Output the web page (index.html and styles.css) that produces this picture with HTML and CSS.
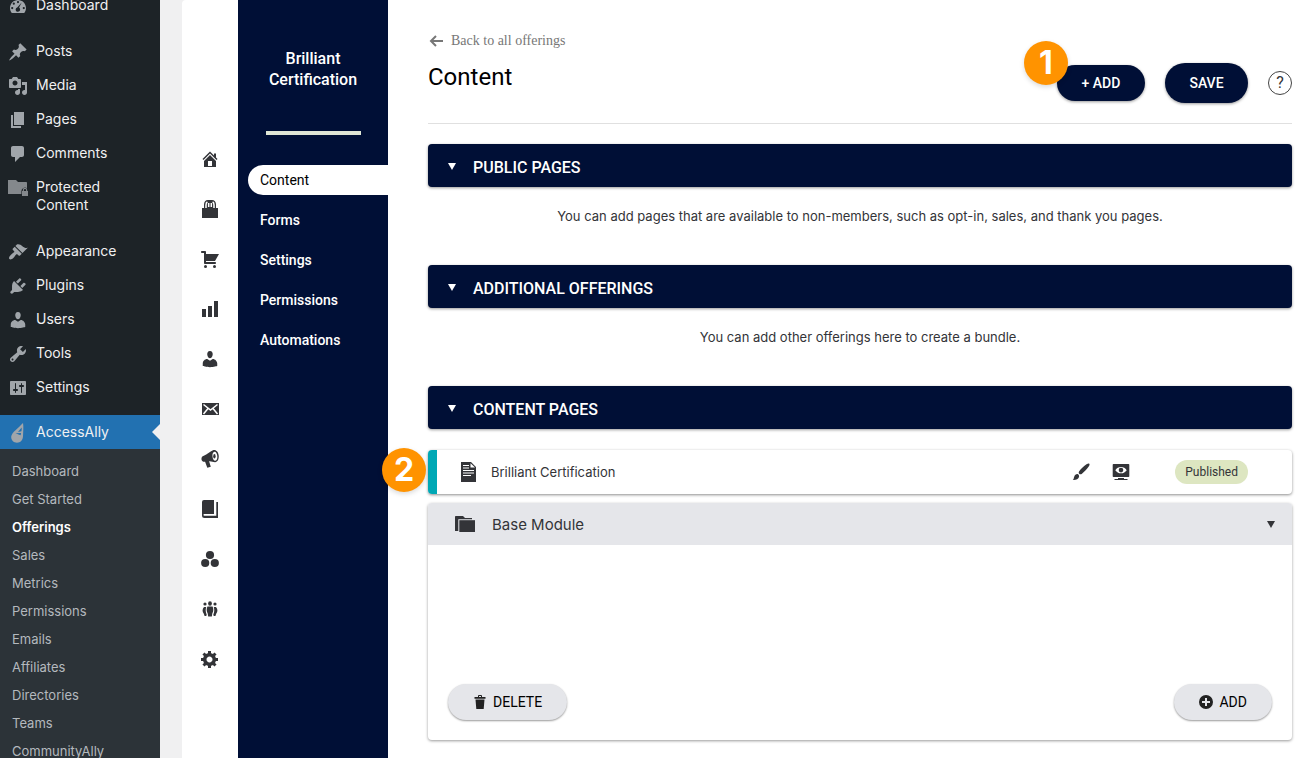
FILE: index.html
```
<!DOCTYPE html>
<html lang="en">
<head>
<meta charset="UTF-8" />
<meta name="viewport" content="width=device-width, initial-scale=1" />
<title>Content - Brilliant Certification</title>
<link rel="stylesheet" href="styles.css">
</head>
<body>
<div class="layout">

  <!-- WordPress admin menu -->
  <nav class="wp-menu" aria-label="Main menu">
    <ul class="wp-list">
      <li><a href="#"><svg viewBox="0 0 20 20"><path fill-rule="evenodd" d="M3.8 17h12.4c1.100-1.400 1.800-3.100 1.800-5 0-4.400-3.600-8-8-8s-8 3.600-8 8c0 1.900.7 3.600 1.800 5zM10 5a1.100 1.100 0 1 0 0 2.200A1.100 1.100 0 0 0 10 5zM5.800 6.600a1.100 1.100 0 1 0 0 2.200 1.100 1.100 0 0 0 0-2.200zM4.200 11a1.100 1.100 0 1 0 0 2.200 1.100 1.100 0 0 0 0-2.200zM15.800 11a1.100 1.100 0 1 0 0 2.200 1.100 1.100 0 0 0 0-2.200zM13.700 6.500l-2.600 5.100c1.200.8 1.400 2.500.5 3.500-1 1-2.700.9-3.500-.2-.9-1.200-.4-3 1.100-3.500z"/></svg>Dashboard</a></li>
      <li class="spaced"><a href="#"><svg viewBox="0 0 20 20"><path d="M10.440 3.020l1.820-1.820 6.360 6.350-1.830 1.820c-1.050-.68-2.480-.57-3.410.36l-.75.75c-.92.93-1.040 2.350-.35 3.410l-1.830 1.820-2.410-2.410-2.800 2.790c-.42.42-3.380 2.710-3.800 2.290s1.860-3.390 2.280-3.810l2.790-2.790L4.100 9.360l1.830-1.820c1.050.69 2.480.57 3.400-.36l.75-.75c.93-.92 1.050-2.350.36-3.410z"/></svg>Posts</a></li>
      <li><a href="#"><svg viewBox="0 0 20 20"><path fill-rule="evenodd" d="M13 11V4c0-.55-.45-1-1-1h-1.670L9 1H5L3.670 3H2c-.55 0-1 .45-1 1v7c0 .55.45 1 1 1h10c.55 0 1-.45 1-1zM7 4.500c1.380 0 2.500 1.120 2.500 2.500S8.380 9.500 7 9.500 4.500 8.380 4.500 7 5.620 4.500 7 4.500zM14 6h5v10.500c0 1.380-1.120 2.500-2.500 2.500S14 17.880 14 16.500s1.120-2.500 2.500-2.500c.17 0 .34.02.5.05V9h-3V6zm-4 8.050V13h2v3.500c0 1.380-1.120 2.500-2.500 2.500S7 17.880 7 16.500 8.120 14 9.500 14c.17 0 .34.02.5.05z"/></svg>Media</a></li>
      <li><a href="#"><svg viewBox="0 0 20 20"><path d="M6 15V2h10v13H6zm-1 1h8v2H3V5h2v11z"/></svg>Pages</a></li>
      <li><a href="#"><svg viewBox="0 0 20 20"><path d="M5 2h9c1.100 0 2 .9 2 2v7c0 1.100-.9 2-2 2h-2l-5 5v-5H5c-1.100 0-2-.9-2-2V4c0-1.100.9-2 2-2z"/></svg>Comments</a></li>
      <li><a href="#"><svg viewBox="0 0 20 20" class="dim"><path d="M0 2h8l2 2h8c.6 0 1 .4 1 1v5.200a3.600 3.600 0 0 0-5.600 2.800v3H0z"/><path fill-rule="evenodd" d="M14 13h.8v-1a2.200 2.200 0 0 1 4.400 0v1h.8v5h-6zM15.900 13h2.200v-1a1.100 1.100 0 0 0-2.200 0z"/></svg>Protected Content</a></li>
      <li class="spaced"><a href="#"><svg viewBox="0 0 20 20"><path d="M14.480 11.060L7.410 3.990l1.500-1.500c.5-.56 2.300-.47 3.510.32 1.210.8 1.430 1.280 2.910 2.100 1.180.64 2.450 1.260 4.450.85zm-.71.71L6.700 4.700 4.930 6.470c-.39.39-.39 1.020 0 1.410l1.060 1.060c.39.39.39 1.030 0 1.420-.6.6-1.430 1.110-2.210 1.690-.35.26-.7.53-1.010.84C1.430 14.230.4 16.080 1.400 17.070c.99 1 2.840-.03 4.180-1.360.31-.31.58-.66.85-1.020.57-.78 1.080-1.610 1.690-2.210.39-.39 1.020-.39 1.410 0l1.060 1.060c.39.39 1.020.39 1.410 0z"/></svg>Appearance</a></li>
      <li><a href="#"><svg viewBox="0 0 20 20"><path d="M13.110 4.360L9.870 7.600 8 5.730l3.240-3.240c.35-.34 1.050-.2 1.560.32.52.51.66 1.210.31 1.550zm-8 1.770l.91-1.120 9.010 9.010-1.190.84c-.71.71-2.630 1.160-3.820 1.160H6.140L4.900 17.260c-.59.59-1.540.59-2.120 0-.59-.58-.59-1.530 0-2.120l1.240-1.240v-3.880c0-1.130.4-3.190 1.090-3.890zm7.260 3.970l3.240-3.240c.34-.35 1.040-.21 1.550.31.52.51.66 1.210.31 1.550l-3.240 3.250z"/></svg>Plugins</a></li>
      <li><a href="#"><svg viewBox="0 0 20 20"><path d="M10 9.250c-2.270 0-2.730-3.440-2.730-3.440C7 4.020 7.820 2 9.970 2c2.160 0 2.980 2.020 2.710 3.810 0 0-.41 3.440-2.680 3.440zm0 2.570L12.720 10c2.390 0 4.520 2.330 4.520 4.530v2.490s-3.650 1.130-7.240 1.130c-3.650 0-7.240-1.130-7.240-1.130v-2.490c0-2.250 1.940-4.480 4.470-4.480z"/></svg>Users</a></li>
      <li><a href="#"><svg viewBox="0 0 20 20"><path fill-rule="evenodd" d="M16.680 9.770c-1.340 1.340-3.300 1.670-4.950.99l-5.410 6.520c-.99.99-2.590.99-3.580 0s-.99-2.590 0-3.570l6.520-5.420c-.68-1.650-.35-3.610.99-4.950 1.280-1.280 3.120-1.620 4.720-1.060l-2.890 2.890 2.820 2.820 2.860-2.870c.53 1.580.18 3.390-1.080 4.650zM3.810 16.210c.4.39 1.040.39 1.430 0 .4-.4.4-1.040 0-1.430-.39-.4-1.030-.4-1.430 0-.39.39-.39 1.030 0 1.430z"/></svg>Tools</a></li>
      <li><a href="#"><svg viewBox="0 0 20 20"><path fill-rule="evenodd" d="M18 16V4c0-.55-.45-1-1-1H3c-.55 0-1 .45-1 1v12c0 .55.45 1 1 1h14c.55 0 1-.45 1-1zM8 11h1c.55 0 1 .45 1 1s-.45 1-1 1H8v1.500c0 .28-.22.5-.5.5s-.5-.22-.5-.5V13H6c-.55 0-1-.45-1-1s.45-1 1-1h1V5.500c0-.28.22-.5.5-.5s.5.22.5.5V11zm5-2h-1c-.55 0-1-.45-1-1s.45-1 1-1h1V5.500c0-.28.22-.5.5-.5s.5.22.5.5V7h1c.55 0 1 .45 1 1s-.45 1-1 1h-1v5.500c0 .28-.22.5-.5.5s-.5-.22-.5-.5V9z"/></svg>Settings</a></li>
      <li class="current">
        <a href="#"><svg viewBox="0 0 20 20"><path d="M15 0c.7 4 .2 8 0 13.500-.2 3.500-2.500 6.200-6 6.200S3 17 3.200 13.800C3.500 9.500 10.500 5 15 0z"/><path class="leaf" d="M13.600 4.500c.2 1.500.1 2.500-.2 3.800L10 9zM7.500 10.200l5.600-.2-.5 2.200-2-.8z"/></svg>AccessAlly</a>
        <ul class="wp-submenu">
          <li><a href="#">Dashboard</a></li>
          <li><a href="#">Get Started</a></li>
          <li><a href="#" class="active" aria-current="page">Offerings</a></li>
          <li><a href="#">Sales</a></li>
          <li><a href="#">Metrics</a></li>
          <li><a href="#">Permissions</a></li>
          <li><a href="#">Emails</a></li>
          <li><a href="#">Affiliates</a></li>
          <li><a href="#">Directories</a></li>
          <li><a href="#">Teams</a></li>
          <li><a href="#">CommunityAlly</a></li>
        </ul>
      </li>
    </ul>
  </nav>

  <div class="app">

    <!-- Icon rail -->
    <nav class="rail" aria-label="AccessAlly">
      <a href="#" aria-label="Home"><svg viewBox="0 0 20 20"><path fill-rule="evenodd" d="M16 8.500l1.530 1.530-1.060 1.060L10 4.600l-6.470 6.490-1.060-1.060L10 2.500l4 4v-2h2v4zm-6-2.460l6 5.990V18H4v-5.970zM12 17v-5H8v5h4z"/></svg></a>
      <a href="#" aria-label="Offerings"><svg viewBox="0 0 20 20"><path d="M2 9h2V5.500C4 3 5.500 1 8 1h4c2.500 0 4 2 4 4.500V9h2v10H2z"/><path class="cut" d="M6 9V6c0-1.500.4-2.500 1.400-3M14 9V6c0-1.500-.4-2.500-1.400-3M8.700 8V4M11.300 8V4"/></svg></a>
      <a href="#" aria-label="Sales"><svg viewBox="0 0 20 20"><path d="M6 13h9c.55 0 1 .45 1 1s-.45 1-1 1H5c-.55 0-1-.45-1-1V4H2c-.55 0-1-.45-1-1s.45-1 1-1h3c.55 0 1 .45 1 1v2h13l-4 7H6v1z"/><circle cx="5.500" cy="17.500" r="1.500"/><circle cx="14.500" cy="17.500" r="1.500"/></svg></a>
      <a href="#" aria-label="Metrics"><svg viewBox="0 0 20 20"><path d="M18 18V2h-4v16h4zm-6 0V7H8v11h4zm-6 0v-8H2v8h4z"/></svg></a>
      <a href="#" aria-label="Permissions"><svg viewBox="0 0 20 20"><path d="M10 9.250c-2.270 0-2.730-3.440-2.730-3.440C7 4.020 7.820 2 9.970 2c2.160 0 2.980 2.020 2.710 3.810 0 0-.41 3.440-2.680 3.440zm0 2.570L12.720 10c2.390 0 4.520 2.330 4.520 4.530v2.490s-3.650 1.130-7.240 1.130c-3.650 0-7.240-1.130-7.240-1.130v-2.490c0-2.250 1.940-4.480 4.470-4.480z"/></svg></a>
      <a href="#" aria-label="Emails"><svg viewBox="0 0 20 20"><path d="M2 4h17v12H2z"/><path class="cut" d="M3.500 5.500l7 5.500 7-5.500M3.500 15L8 9.500M17.500 15L13 9.500"/></svg></a>
      <a href="#" aria-label="Affiliates"><svg viewBox="0 0 20 20"><path fill-rule="evenodd" d="M13 1.300c2.800-1 5.300 1.500 5.700 5.300.4 3.600-1.200 6.600-3.600 6.600-2 0-4.200-1.200-6-.9l1.700 5.500-3.500.9-2.200-5.900c-1.800.3-3.300-.6-3.600-2.400-.3-1.900.6-3.300 2.300-3.700C7.200 5.500 9.800 2.600 13 1.300zM14.500 2.700c-1.500.2-2.300 2-2 4.800.2 2.600 1.400 4.300 2.800 4.200 1.500-.2 2.300-2.200 2-4.700-.3-2.600-1.500-4.500-2.800-4.300z"/><ellipse cx="14.400" cy="7.200" rx="1.200" ry="2.200"/></svg></a>
      <a href="#" aria-label="Directories"><svg viewBox="0 0 20 20"><path d="M4 1h10v14H4.300a.8.8 0 0 0 0 1.700h12V3H18v16H4.500A2.500 2.500 0 0 1 2 16.500V3a2 2 0 0 1 2-2z"/></svg></a>
      <a href="#" aria-label="Teams"><svg viewBox="0 0 20 20"><circle cx="10" cy="6" r="4.100"/><circle cx="5.200" cy="14" r="4.100"/><circle cx="14.800" cy="14" r="4.100"/></svg></a>
      <a href="#" aria-label="Community"><svg viewBox="0 0 20 20"><ellipse cx="10" cy="4.500" rx="1.900" ry="2.200"/><circle cx="5" cy="5" r="1.600"/><circle cx="15" cy="5" r="1.600"/><path d="M7.400 7.500h5.200c1 2 1 5-.3 7l-.5 3H8.200l-.5-3c-1.300-2-1.300-5-.3-7zM4 8h2.200c-.8 2.500-.6 5 .5 7.500l-.4 1.500H4.600l-.8-2.300C2 12.700 2.300 9.500 4 8zM16 8h-2.200c.8 2.500.6 5-.5 7.500l.4 1.500h1.700l.8-2.300C18 12.700 17.700 9.500 16 8z"/></svg></a>
      <a href="#" aria-label="Settings"><svg viewBox="0 0 20 20"><path fill-rule="evenodd" d="M18 12h-2.180c-.17.7-.44 1.350-.81 1.930l1.540 1.540-2.100 2.100-1.540-1.540c-.58.36-1.230.63-1.910.79V19H8v-2.180c-.68-.16-1.330-.43-1.910-.79l-1.540 1.540-2.120-2.120 1.540-1.540c-.36-.58-.63-1.230-.79-1.910H1V9.030h2.170c.16-.7.44-1.350.8-1.940L2.430 5.550l2.100-2.100 1.540 1.540c.58-.37 1.240-.64 1.930-.81V2h3v2.180c.68.16 1.330.43 1.910.79l1.540-1.540 2.120 2.120-1.540 1.540c.36.59.64 1.240.8 1.940H18V12zm-8.500 1.500c1.660 0 3-1.340 3-3s-1.340-3-3-3-3 1.340-3 3 1.340 3 3 3z"/></svg></a>
    </nav>

    <!-- Offering navigation -->
    <aside class="offering">
      <h2>Brilliant Certification</h2>
      <hr>
      <nav aria-label="Offering">
        <a href="#" class="active" aria-current="page">Content</a>
        <a href="#">Forms</a>
        <a href="#">Settings</a>
        <a href="#">Permissions</a>
        <a href="#">Automations</a>
      </nav>
    </aside>

    <main class="content">
      <header class="page-head">
        <div class="page-title">
          <a href="#" class="back"><svg viewBox="0 0 16 14"><path d="M15 7H3M8 2L3 7l5 5"/></svg>Back to all offerings</a>
          <h1>Content</h1>
        </div>
        <div class="actions">
          <div class="marked">
            <button type="button" class="btn btn-add">+ ADD</button>
            <span class="badge badge-add">1</span>
          </div>
          <button type="button" class="btn btn-save">SAVE</button>
          <button type="button" class="help" aria-label="Help">?</button>
        </div>
      </header>

      <section>
        <h2><button type="button" class="bar" aria-expanded="true"><svg viewBox="0 0 10 8"><path d="M1 1h8L5 8z"/></svg>PUBLIC PAGES</button></h2>
        <p class="note">You can add pages that are available to non-members, such as opt-in, sales, and thank you pages.</p>
      </section>

      <section>
        <h2><button type="button" class="bar" aria-expanded="true"><svg viewBox="0 0 10 8"><path d="M1 1h8L5 8z"/></svg>ADDITIONAL OFFERINGS</button></h2>
        <p class="note">You can add other offerings here to create a bundle.</p>
      </section>

      <section>
        <h2><button type="button" class="bar" aria-expanded="true"><svg viewBox="0 0 10 8"><path d="M1 1h8L5 8z"/></svg>CONTENT PAGES</button></h2>

        <div class="page-row">
          <span class="badge badge-row">2</span>
          <svg class="icon" viewBox="0 0 20 20"><path fill-rule="evenodd" d="M2 0h10l5 5v15H2zM11.500 1.200V5.600H16z"/><path class="cut thin" d="M4 3.500h6M4 6h6M4 8.500h11M4 11h11M4 13.500h8"/></svg>
          <span class="page-name">Brilliant Certification</span>
          <button type="button" class="tool" aria-label="Design"><svg viewBox="0 0 20 20"><path d="M18.300 1.700c.5.500.2 1.700-.6 2.900-1.800 2.800-4.600 5.600-7 7.300-.9.700-1.900.5-2.500-.1-.6-.7-.7-1.600 0-2.500 1.900-2.500 4.600-5.200 7.300-7 1.200-.8 2.300-1.100 2.800-.6zM7 12.200c1 .7 1.300 1.600 1 2.800-.6 2.300-3.300 3.300-6.300 3 1.200-.8.9-1.600 1.500-3.300.6-1.800 2.200-3 3.800-2.500z"/></svg></button>
          <button type="button" class="tool" aria-label="Preview"><svg viewBox="0 0 20 20"><path fill-rule="evenodd" d="M2.500 2h15c.5 0 .8.300.8.800v11.400c0 .5-.3.800-.8.800h-15c-.5 0-.8-.3-.8-.8V2.800c0-.5.300-.8.800-.8zM10 5C7.500 5 5.700 6.200 4.300 8.200 5.700 10.200 7.500 11.300 10 11.300s4.300-1.100 5.700-3.100C14.300 6.200 12.500 5 10 5z"/><circle cx="10" cy="8.100" r="2.300"/><path d="M7 16h6v1H7zM3.500 17h13v1h-13z"/></svg></button>
          <span class="status">Published</span>
        </div>

        <article class="module">
          <header class="module-head">
            <svg class="icon-folder" viewBox="0 0 22 18"><path d="M2 1h7l2 2h7v1.300H4.300V16H1V2c0-.6.4-1 1-1z"/><path d="M5.300 5.200H21V17H5.300z"/></svg>
            <h3>Base Module</h3>
            <button type="button" class="toggle" aria-label="Collapse module"><svg viewBox="0 0 10 8"><path d="M1 1h8L5 8z"/></svg></button>
          </header>
          <footer class="module-foot">
            <button type="button" class="btn-light"><svg viewBox="0 0 14 14"><path d="M1.500 2H5V1a1 1 0 0 1 1-1h2a1 1 0 0 1 1 1v1h3.500v1.700h-11zM6 2h2V1H6zM2.500 4.500h9l-.8 9.500H3.300z"/></svg>DELETE</button>
            <button type="button" class="btn-light"><svg viewBox="0 0 14 14"><path fill-rule="evenodd" d="M7 0a7 7 0 1 1 0 14A7 7 0 0 1 7 0zM6 3v3H3v2h3v3h2V8h3V6H8V3z"/></svg>ADD</button>
          </footer>
        </article>
      </section>
    </main>

  </div>
</div>
</body>
</html>
```
FILE: styles.css
```
* {
  box-sizing: border-box;
}
body {
  margin: 0;
  background: #f0f0f1;
  font-family: Inter, sans-serif;
  font-size: 13px;
  color: #333438;
}
h1, h2, h3, p, ul {
  margin: 0;
  padding: 0;
  font-weight: 400;
}
ul {
  list-style: none;
}
a {
  color: inherit;
  text-decoration: none;
}
button {
  border: 0;
  padding: 0;
  background: none;
  color: inherit;
  font: inherit;
  cursor: pointer;
}
svg {
  flex: none;
  fill: currentColor;
}

.layout {
  display: flex;
  height: 100vh;
  overflow: hidden;
}

/* WordPress admin menu */
.wp-menu {
  flex: none;
  width: 160px;
  background: #1d2327;
  color: #f0f0f1;
}
.wp-list {
  margin-top: -12px;
}
.wp-list > li > a {
  display: flex;
  gap: 8px;
  padding: 8px 24px 8px 8px;
  font-size: 14px;
  line-height: 18px;
}
.wp-list svg {
  width: 20px;
  height: 20px;
  margin-bottom: -2px;
  color: #a0a5aa;
}
.wp-list svg.dim {
  color: #84888c;
}
.wp-list .spaced {
  margin-top: 12px;
}
.wp-list .current {
  margin-top: 11px;
}
.wp-list > .current > a {
  position: relative;
  background: #2271b1;
}
.wp-list > .current > a::after {
  content: "";
  position: absolute;
  right: 0;
  top: 9px;
  border: 8px solid transparent;
  border-right-color: #f0f0f1;
  border-left: 0;
}
.leaf {
  fill: #2271b1;
}
.wp-submenu {
  padding: 8px 0;
  background: #2c3338;
  color: #b4b9be;
}
.wp-submenu a {
  display: block;
  padding: 5px 12px;
  line-height: 18px;
}
.wp-submenu .active {
  color: #fff;
  font-weight: 600;
}

.app {
  display: flex;
  flex: 1;
  min-width: 0;
  margin-left: 22px;
  background: #fff;
  border-top-left-radius: 4px;
}

/* Icon rail */
.rail {
  display: flex;
  flex: none;
  flex-direction: column;
  width: 56px;
  padding-top: 134px;
}
.rail a {
  display: flex;
  align-items: center;
  justify-content: center;
  height: 50px;
}
.rail svg {
  width: 20px;
  height: 20px;
}
.cut {
  fill: none;
  stroke: #fff;
  stroke-width: 1.5;
}
.cut.thin {
  stroke-width: 1;
}

/* Offering navigation */
.offering {
  flex: none;
  width: 150px;
  padding-top: 48px;
  background: #000f36;
  color: #fff;
  font-family: Roboto, sans-serif;
}
.offering h2 {
  padding: 0 24px;
  font-size: 16px;
  font-weight: 500;
  line-height: 21px;
  text-align: center;
}
.offering hr {
  width: 95px;
  height: 4px;
  margin: 41px auto 30px;
  border: 0;
  background: #dfe6d6;
}
.offering nav {
  display: flex;
  flex-direction: column;
  gap: 10px;
  padding-left: 10px;
}
.offering nav a {
  padding: 0 12px;
  border-radius: 15px 0 0 15px;
  font-size: 14px;
  font-weight: 500;
  line-height: 30px;
}
.offering nav .active {
  background: #fff;
  color: #000;
  font-weight: 400;
}

/* Page content */
.content {
  flex: 1;
  min-width: 0;
  padding: 31px 23px 0 40px;
}
.page-head {
  display: flex;
  justify-content: space-between;
  height: 93px;
  margin-bottom: 20px;
  border-bottom: 1px solid #e0e0e0;
}
.back {
  display: flex;
  align-items: center;
  gap: 7px;
  color: #777;
  font-family: "Liberation Serif", serif;
  font-size: 14px;
  line-height: 20px;
}
.back svg {
  width: 16px;
  height: 14px;
  fill: none;
  stroke: currentColor;
  stroke-width: 2;
}
.page-title h1 {
  margin-top: 11px;
  color: #000;
  font-family: Roboto, sans-serif;
  font-size: 24px;
  line-height: 30px;
}
.actions {
  display: flex;
  align-items: center;
  gap: 20px;
  padding-top: 12px;
  font-family: Roboto, sans-serif;
}
.marked {
  position: relative;
}
.btn {
  padding: 0 20px;
  border-radius: 20px;
  background: #000f36;
  color: #fff;
  font-size: 14px;
  font-weight: 500;
  box-shadow: 0 1px 3px rgb(0 0 0 / 0.4);
}
.btn-add {
  display: block;
  min-width: 88px;
  height: 36px;
}
.btn-save {
  min-width: 83px;
  height: 40px;
}
.help {
  width: 24px;
  height: 24px;
  border: 1px solid #444;
  border-radius: 50%;
  font-size: 16px;
  line-height: 22px;
}
.badge {
  position: absolute;
  width: 44px;
  height: 44px;
  border-radius: 50%;
  background: #ff9300;
  color: #fff;
  font-family: Inter, sans-serif;
  font-size: 32px;
  font-weight: 700;
  line-height: 44px;
  text-align: center;
  box-shadow: 0 2px 5px rgb(0 0 0 / 0.15);
}
.badge-add {
  left: -33px;
  top: -24px;
}
.badge-row {
  left: -55px;
  top: -2px;
}

.bar {
  display: flex;
  align-items: center;
  gap: 16px;
  width: 100%;
  height: 43px;
  padding: 4px 19px 0;
  border-radius: 4px;
  background: #000f36;
  color: #fff;
  font-family: Roboto, sans-serif;
  font-size: 16px;
  font-weight: 500;
  box-shadow: 0 1px 3px rgb(0 0 0 / 0.4);
}
.bar svg,
.toggle svg {
  display: block;
  width: 10px;
  height: 8px;
}
.bar svg {
  margin-bottom: 4px;
}
.note {
  padding: 19px 0 39px;
  line-height: 20px;
  text-align: center;
}

.page-row {
  position: relative;
  display: flex;
  align-items: center;
  height: 44px;
  margin: 21px 0 9px;
  padding: 0 44px 0 22px;
  border-left: 9px solid #00a8b5;
  border-radius: 4px;
  box-shadow: 0 1px 3px rgb(0 0 0 / 0.45);
}
.icon {
  width: 20px;
  height: 20px;
}
.page-name {
  flex: 1;
  padding-left: 12px;
}
.tool {
  width: 20px;
  height: 20px;
  margin-right: 20px;
}
.tool svg {
  display: block;
}
.status {
  margin-left: 24px;
  padding: 0 10px;
  border-radius: 12px;
  background: #dde6c1;
  font-family: Roboto, sans-serif;
  font-size: 12px;
  line-height: 24px;
}

.module {
  display: flex;
  flex-direction: column;
  justify-content: space-between;
  min-height: 237px;
  border-radius: 4px;
  box-shadow: 0 1px 3px rgb(0 0 0 / 0.4);
}
.module-head {
  display: flex;
  align-items: center;
  height: 42px;
  padding: 0 16px 0 26px;
  border-radius: 4px 4px 0 0;
  background: #e5e6ea;
}
.icon-folder {
  width: 22px;
  height: 18px;
}
.module-head h3 {
  flex: 1;
  padding-left: 16px;
  font-size: 15px;
}
.module-foot {
  display: flex;
  justify-content: space-between;
  padding: 20px;
}
.btn-light {
  display: flex;
  align-items: center;
  gap: 6px;
  height: 36px;
  padding: 0 25px;
  border-radius: 18px;
  background: #e5e6ea;
  color: #000;
  font-family: Roboto, sans-serif;
  font-size: 14px;
  box-shadow: 0 1px 2px rgb(0 0 0 / 0.4);
}
.btn-light svg {
  width: 14px;
  height: 14px;
  color: #222;
}
```
